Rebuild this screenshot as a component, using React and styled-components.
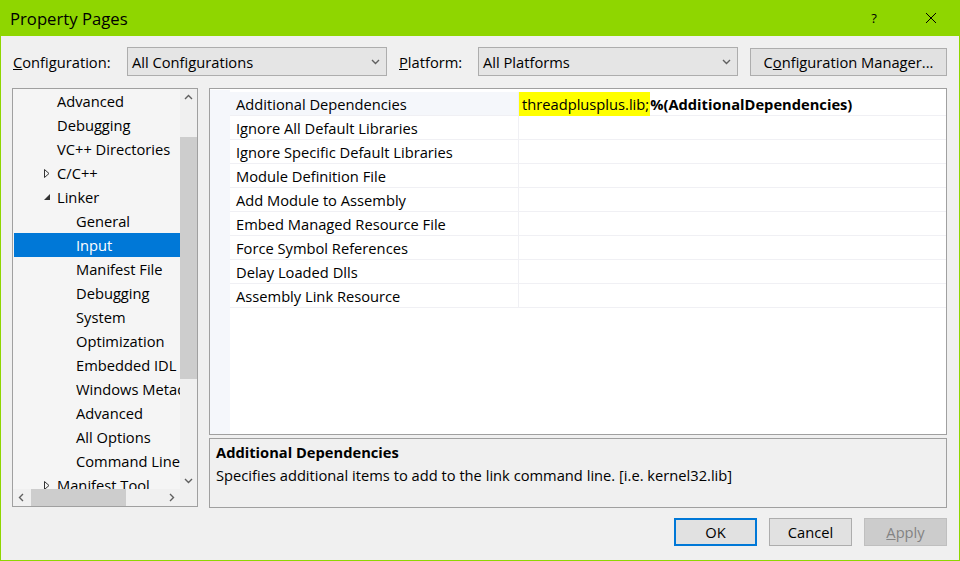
import React from "react";
import styled, { createGlobalStyle } from "styled-components";

const GlobalStyle = createGlobalStyle`
  html, body {
    margin: 0;
    padding: 0;
    background: #f0f0f0;
  }
  * {
    box-sizing: border-box;
  }
`;

const Window = styled.div`
  width: 960px;
  height: 561px;
  border: 1px solid #8fd600;
  border-top: none;
  background: #f0f0f0;
  font-family: "Open Sans", "Noto Sans", sans-serif;
  font-size: 14.7px;
  color: #000;
  display: flex;
  flex-direction: column;
`;

const TitleBar = styled.div`
  height: 36px;
  margin: 0 -1px;
  background: #8fd600;
  display: flex;
  align-items: center;
  padding-left: 10px;
  font-size: 16.7px;
`;

const TitleText = styled.div`
  flex: 1;
`;

const TitleButton = styled.div`
  width: 46px;
  height: 36px;
  display: flex;
  align-items: center;
  justify-content: center;
  font-size: 13px;
  margin-right: ${({ last }) => (last ? "6px" : "11px")};
`;

const Content = styled.div`
  flex: 1;
  padding: 11px 12px 0 11px;
  display: flex;
  flex-direction: column;
`;

const ConfigRow = styled.div`
  display: flex;
  align-items: center;
  height: 29px;
`;

const Label = styled.div`
  width: ${({ w }) => w}px;
  padding-left: 1px;
`;

const Combo = styled.div`
  width: 260px;
  height: 29px;
  border: 1px solid #adadad;
  background: #e5e5e5;
  display: flex;
  align-items: center;
  padding: 0 6px 0 4px;
  margin-right: ${({ mr }) => mr || 0}px;
`;

const ComboText = styled.div`
  flex: 1;
`;

const Button = styled.div`
  width: ${({ w }) => w || 83}px;
  height: 28px;
  display: flex;
  align-items: center;
  justify-content: center;
  background: ${({ disabled }) => (disabled ? "#cccccc" : "#e1e1e1")};
  color: ${({ disabled }) => (disabled ? "#838383" : "#000")};
  border: ${({ primary, disabled }) =>
    primary ? "2px solid #0078d7" : disabled ? "1px solid #bfbfbf" : "1px solid #adadad"};
`;

const Main = styled.div`
  display: flex;
  margin-top: 12px;
  height: 420px;
  gap: 11px;
`;

const Tree = styled.div`
  width: 186px;
  height: 419px;
  border: 1px solid #a0a0a0;
  display: grid;
  grid-template-columns: 1fr 17px;
  grid-template-rows: 1fr 17px;
  background: #f0f0f0;
`;

const TreeList = styled.div`
  background: #f5f5f5;
  overflow: hidden;
  padding: 0 0 0 1px;
`;

const TreeRow = styled.div`
  height: 24px;
  display: flex;
  align-items: center;
  white-space: nowrap;
  padding-left: ${({ level }) => (level === 2 ? 62 : 30)}px;
  background: ${({ selected }) => (selected ? "#0078d7" : "transparent")};
  color: ${({ selected }) => (selected ? "#fff" : "#000")};
`;

const Expander = styled.span`
  width: 13px;
  display: inline-flex;
  align-items: center;
`;

const VScroll = styled.div`
  display: flex;
  flex-direction: column;
  align-items: center;
  background: #f0f0f0;
`;

const HScroll = styled.div`
  display: flex;
  align-items: center;
  background: #f0f0f0;
`;

const ScrollArrow = styled.div`
  width: 17px;
  height: 17px;
  display: flex;
  align-items: center;
  justify-content: center;
  flex: none;
`;

const VTrack = styled.div`
  flex: 1;
  width: 100%;
  position: relative;
`;

const HTrack = styled.div`
  flex: 1;
  height: 100%;
  position: relative;
`;

const Thumb = styled.div`
  position: absolute;
  background: #cdcdcd;
`;

const Corner = styled.div`
  background: #f0f0f0;
`;

const RightCol = styled.div`
  flex: 1;
  display: flex;
  flex-direction: column;
  gap: 3px;
`;

const Grid = styled.div`
  height: 347px;
  border: 1px solid #a0a0a0;
  background: #fff;
  display: flex;
  padding-top: 1px;
`;

const Gutter = styled.div`
  width: 20px;
  background: #f5f7fb;
`;

const Rows = styled.div`
  flex: 1;
  padding-top: 2px;
`;

const PropRow = styled.div`
  display: flex;
  height: 24px;
  border-bottom: 1px solid #f0f0f4;
`;

const NameCell = styled.div`
  width: 289px;
  padding-left: 6px;
  display: flex;
  align-items: center;
  border-right: 1px solid #f0f0f4;
  background: ${({ active }) => (active ? "#f5f7fb" : "#fff")};
  white-space: nowrap;
`;

const ValueCell = styled.div`
  flex: 1;
  display: flex;
  align-items: center;
  white-space: nowrap;
`;

const Highlight = styled.span`
  background: #ffff00;
  padding: 2px 1px 2px 3px;
`;

const Bold = styled.span`
  font-weight: 700;
`;

const Desc = styled.div`
  height: 70px;
  border: 1px solid #a0a0a0;
  background: #f0f0f0;
  padding: 2px 6px;
  line-height: 23px;
`;

const DescTitle = styled.div`
  font-weight: 700;
`;

const ButtonRow = styled.div`
  display: flex;
  justify-content: flex-end;
  gap: 12px;
  margin-top: 10px;
`;

const Chevron = ({ dir = "down", color = "#606060", size = 9 }) => {
  const pts = {
    down: "1,3 4.5,6.5 8,3",
    up: "1,6 4.5,2.5 8,6",
    left: "6,1 2.5,4.5 6,8",
    right: "3,1 6.5,4.5 3,8",
  }[dir];
  return (
    <svg width={size} height={size} viewBox="0 0 9 9">
      <polyline points={pts} fill="none" stroke={color} strokeWidth="1.4" />
    </svg>
  );
};

const Collapsed = () => (
  <svg width="6" height="9" viewBox="0 0 6 9">
    <polygon points="0.5,0.5 5,4.5 0.5,8.5" fill="none" stroke="#333" strokeWidth="1" />
  </svg>
);

const Expanded = () => (
  <svg width="7" height="7" viewBox="0 0 7 7">
    <polygon points="6,0 6,6 0,6" fill="#333" />
  </svg>
);

const CloseIcon = () => (
  <svg width="12" height="12" viewBox="0 0 12 12">
    <path d="M1 1 L11 11 M11 1 L1 11" stroke="#000" strokeWidth="1" />
  </svg>
);

const treeItems = [
  { label: "Advanced", level: 1 },
  { label: "Debugging", level: 1 },
  { label: "VC++ Directories", level: 1 },
  { label: "C/C++", level: 1, exp: "collapsed" },
  { label: "Linker", level: 1, exp: "expanded" },
  { label: "General", level: 2 },
  { label: "Input", level: 2, selected: true },
  { label: "Manifest File", level: 2 },
  { label: "Debugging", level: 2 },
  { label: "System", level: 2 },
  { label: "Optimization", level: 2 },
  { label: "Embedded IDL", level: 2 },
  { label: "Windows Metadata", level: 2 },
  { label: "Advanced", level: 2 },
  { label: "All Options", level: 2 },
  { label: "Command Line", level: 2 },
  { label: "Manifest Tool", level: 1, exp: "collapsed" },
];

const properties = [
  "Additional Dependencies",
  "Ignore All Default Libraries",
  "Ignore Specific Default Libraries",
  "Module Definition File",
  "Add Module to Assembly",
  "Embed Managed Resource File",
  "Force Symbol References",
  "Delay Loaded Dlls",
  "Assembly Link Resource",
];

export default function App() {
  return (
    <>
      <GlobalStyle />
      <Window>
        <TitleBar>
          <TitleText>Property Pages</TitleText>
          <TitleButton>?</TitleButton>
          <TitleButton last>
            <CloseIcon />
          </TitleButton>
        </TitleBar>
        <Content>
          <ConfigRow>
            <Label w={115}>
              <u>C</u>onfiguration:
            </Label>
            <Combo mr={11}>
              <ComboText>All Configurations</ComboText>
              <Chevron />
            </Combo>
            <Label w={80}>
              <u>P</u>latform:
            </Label>
            <Combo mr={12}>
              <ComboText>All Platforms</ComboText>
              <Chevron />
            </Combo>
            <Button w={197}>
              C<u>o</u>nfiguration Manager...
            </Button>
          </ConfigRow>

          <Main>
            <Tree>
              <TreeList>
                {treeItems.map((item, i) => (
                  <TreeRow key={i} level={item.level} selected={item.selected}>
                    {item.level === 1 && (
                      <Expander>
                        {item.exp === "collapsed" && <Collapsed />}
                        {item.exp === "expanded" && <Expanded />}
                      </Expander>
                    )}
                    {item.label}
                  </TreeRow>
                ))}
              </TreeList>
              <VScroll>
                <ScrollArrow>
                  <Chevron dir="up" />
                </ScrollArrow>
                <VTrack>
                  <Thumb style={{ top: 31, height: 242, left: 0, right: 0 }} />
                </VTrack>
                <ScrollArrow>
                  <Chevron dir="down" />
                </ScrollArrow>
              </VScroll>
              <HScroll>
                <ScrollArrow>
                  <Chevron dir="left" />
                </ScrollArrow>
                <HTrack>
                  <Thumb style={{ left: 1, width: 95, top: 0, bottom: 0 }} />
                </HTrack>
                <ScrollArrow>
                  <Chevron dir="right" />
                </ScrollArrow>
              </HScroll>
              <Corner />
            </Tree>

            <RightCol>
              <Grid>
                <Gutter />
                <Rows>
                  {properties.map((p, i) => (
                    <PropRow key={p}>
                      <NameCell active={i === 0}>{p}</NameCell>
                      <ValueCell>
                        {i === 0 && (
                          <>
                            <Highlight>threadplusplus.lib;</Highlight>
                            <Bold>%(AdditionalDependencies)</Bold>
                          </>
                        )}
                      </ValueCell>
                    </PropRow>
                  ))}
                </Rows>
              </Grid>
              <Desc>
                <DescTitle>Additional Dependencies</DescTitle>
                <div>Specifies additional items to add to the link command line. [i.e. kernel32.lib]</div>
              </Desc>
            </RightCol>
          </Main>

          <ButtonRow>
            <Button primary>OK</Button>
            <Button>Cancel</Button>
            <Button disabled>
              <u>A</u>pply
            </Button>
          </ButtonRow>
        </Content>
      </Window>
    </>
  );
}
